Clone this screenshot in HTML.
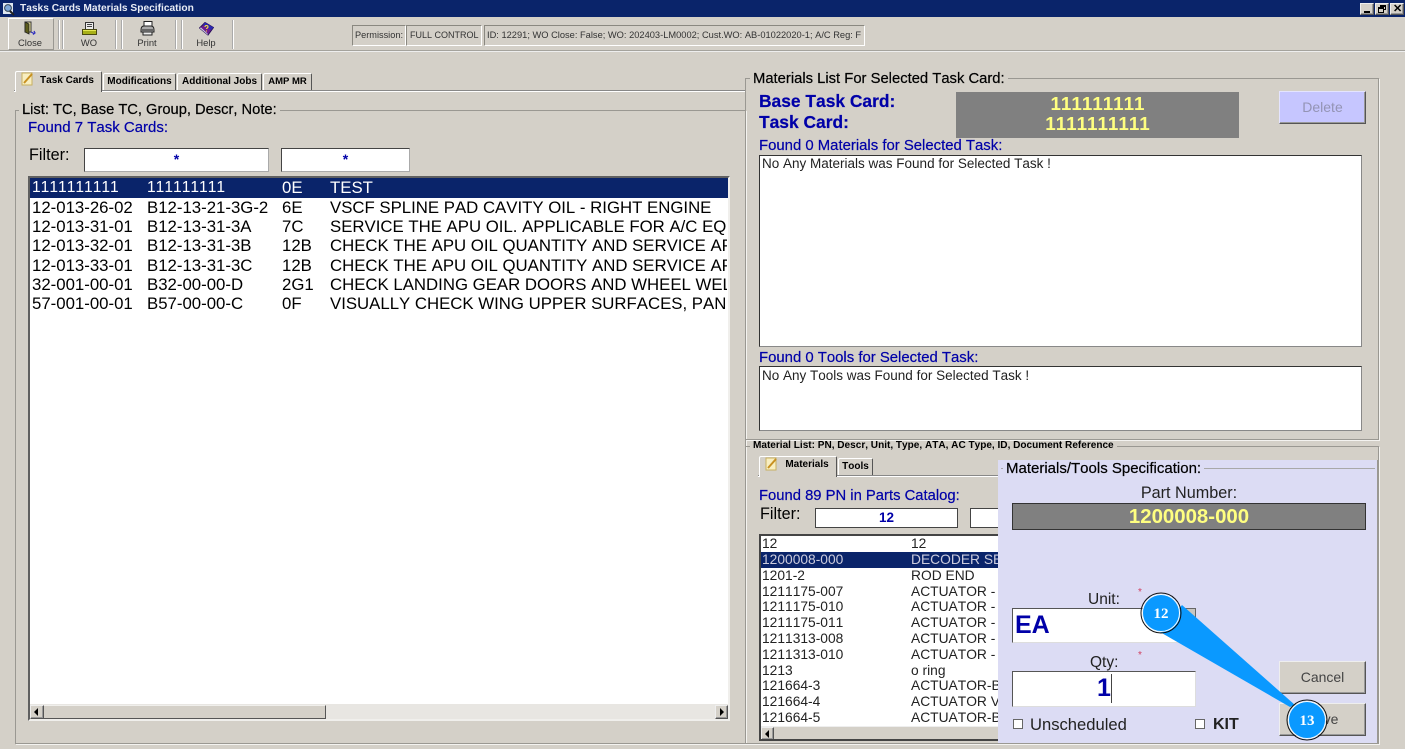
<!DOCTYPE html>
<html><head><meta charset="utf-8">
<style>
html,body{margin:0;padding:0;width:1405px;height:749px;overflow:hidden;background:#d4d0c8;font-family:"Liberation Sans",sans-serif;color:#000;font-kerning:none}
div,span{position:absolute;white-space:nowrap;box-sizing:border-box}
.t{line-height:1}
.blue{color:#0000a8;-webkit-text-stroke:.2px #0000a8}
.frame{border:1px solid #9a9892;box-shadow:1px 1px 0 #f4f3f0}
.leg{background:#d4d0c8;padding:0 3px;line-height:1;-webkit-text-stroke:.2px #000}
.inp{background:#fff;border:1px solid #444;border-right-color:#aaa;border-bottom-color:#aaa;text-align:center;color:#0000a8;font-weight:bold}
.sunk{border:2px solid;border-color:#606060 #f0efec #f0efec #606060}
.row{font-size:16.8px;line-height:19.4px;height:20px;left:0;width:697px;overflow:hidden}
.row span{top:0}
.r2{font-size:13.8px;line-height:16px;height:16px;color:#222;left:0;width:240px}
.r2 span{top:0}
.btn{background:#d4d0c8;border:1px solid;border-color:#eee #555 #555 #eee;box-shadow:inset -1px -1px 0 #999;text-align:center;font-size:14px;color:#444}
.tab{border:1px solid #fff;border-right-color:#555;border-bottom:none;font-size:10px;font-weight:bold;text-align:center;border-radius:2px 2px 0 0;background:#d4d0c8}
.vs{width:2px;background:#aaa;border-right:1px solid #fff;top:20px;height:29px}
.tb{font-size:9.4px;color:#333;text-align:center;top:38px;line-height:1}
</style></head><body>

<div style="left:0;top:0;width:1405px;height:17px;background:#0a246a"></div>
<svg style="position:absolute;left:2px;top:2px" width="14" height="14" viewBox="0 0 14 14"><rect x="1" y="1" width="10" height="11" fill="#dde6f0"/><circle cx="6" cy="6" r="3.4" fill="#7fa8d8" stroke="#345"/><path d="M8 9l4 4" stroke="#222" stroke-width="2"/></svg>
<div class="t" style="left:20px;top:4px;font-size:10.2px;font-weight:bold;color:#e8ecf5">Tasks Cards Materials Specification</div>
<div class="btn" style="left:1360px;top:3px;width:14px;height:12px"></div><div style="left:1364px;top:11px;width:6px;height:2px;background:#000"></div>
<div class="btn" style="left:1375px;top:3px;width:14px;height:12px"></div><div style="left:1380px;top:5px;width:6px;height:5px;border:1px solid #000;border-top-width:2px"></div><div style="left:1378px;top:7px;width:6px;height:6px;border:1px solid #000;border-top-width:2px;background:#d4d0c8"></div>
<div class="btn" style="left:1390px;top:3px;width:14px;height:12px"></div><div class="t" style="left:1393px;top:4px;font-size:11px;font-weight:bold">✕</div>

<div style="left:0;top:50px;width:1405px;height:2px;background:#a5a39d;border-bottom:1px solid #eee"></div>
<div style="left:8px;top:18px;width:46px;height:32px;border:1px solid;border-color:#fff #9a9892 #9a9892 #fff"></div>
<div class="vs" style="left:58px"></div><div class="vs" style="left:62px"></div>
<div class="vs" style="left:115px"></div><div class="vs" style="left:121px"></div>
<div class="vs" style="left:175px"></div><div class="vs" style="left:181px"></div><div class="vs" style="left:232px"></div>
<svg style="position:absolute;left:23px;top:21px" width="14" height="15" viewBox="0 0 14 15"><path d="M2 1h6v10H2z" fill="#f0e8a0" stroke="#333"/><path d="M2 1l4 2v10l-4-2z" fill="#5c5c1c" stroke="#222" stroke-width=".8"/><path d="M8 11l3 1.5M10 13.5l2-1.5-1-2" stroke="#3030c0" fill="none" stroke-width="1.2"/></svg>
<div class="tb" style="left:10px;width:40px">Close</div>
<svg style="position:absolute;left:82px;top:22px" width="15" height="14" viewBox="0 0 15 14"><rect x="3.500" y=".5" width="8" height="7" fill="#ececec" stroke="#333"/><path d="M5 2.500h5M5 4.500h5" stroke="#444"/><path d="M.5 7.500h14v5H.5z" fill="#a8b018" stroke="#4a4a10"/><path d="M1 8.500h13" stroke="#e4e850"/></svg>
<div class="tb" style="left:69px;width:40px">WO</div>
<svg style="position:absolute;left:140px;top:21px" width="15" height="15" viewBox="0 0 15 15"><rect x="4" y=".5" width="8" height="5" fill="#fff" stroke="#222"/><path d="M1 9c0-3 1-4 3-4h7c2 0 3 1 3 4v2H1z" fill="#aaa" stroke="#222"/><path d="M2 9h11" stroke="#222"/><rect x="3" y="11" width="9" height="3" fill="#eee" stroke="#222"/></svg>
<div class="tb" style="left:127px;width:40px">Print</div>
<svg style="position:absolute;left:199px;top:22px" width="15" height="14" viewBox="0 0 15 14"><path d="M.5 6L6 .5l8.500 5L9 13z" fill="#6a1a90" stroke="#28105a"/><path d="M6 .5l8.500 5L12 8 4 3z" fill="#2a2ab0"/><path d="M.5 6L9 13l-.5-1.500L2 5.500z" fill="#c8c8e0"/><path d="M6 5c0-2 3-2 3 0 0 1-1.500 1-1.500 2M7.500 8.500v1" stroke="#ffe040" fill="none" stroke-width="1.100"/></svg>
<div class="tb" style="left:186px;width:40px">Help</div>

<div style="left:352px;top:25px;width:54px;height:21px;border:1px solid;border-color:#8a8880 #fff #fff #8a8880;font-size:9.2px;line-height:19px;padding-left:2px;color:#333">Permission:</div>
<div style="left:406px;top:25px;width:76px;height:21px;border:1px solid;border-color:#8a8880 #fff #fff #8a8880;font-size:9px;line-height:19px;padding-left:3px;color:#333">FULL CONTROL</div>
<div style="left:484px;top:25px;width:381px;height:21px;border:1px solid;border-color:#8a8880 #fff #fff #8a8880;font-size:9.3px;line-height:19px;padding-left:2px;color:#333;overflow:hidden">ID: 12291; WO Close: False; WO: 202403-LM0002; Cust.WO: AB-01022020-1; A/C Reg: F</div>

<!-- left tabs -->
<div style="left:14px;top:90px;width:732px;height:1px;background:#888"></div>
<div style="left:14px;top:91px;width:732px;height:1px;background:#fff"></div>
<div class="tab" style="left:15px;top:71px;width:87px;height:21px;z-index:2;line-height:17px;padding-left:17px;font-size:10px">Task Cards</div>
<svg style="position:absolute;left:21px;top:72px;z-index:3" width="14" height="14" viewBox="0 0 14 14"><rect x="1" y="1" width="10" height="12" fill="#f8eec0" stroke="#c8b060"/><path d="M3 11L11 2" stroke="#c89020" stroke-width="2"/></svg>
<div class="tab" style="left:103px;top:73px;width:73px;height:17px;line-height:15px">Modifications</div>
<div class="tab" style="left:177px;top:73px;width:85px;height:17px;line-height:15px">Additional Jobs</div>
<div class="tab" style="left:263px;top:73px;width:49px;height:17px;line-height:15px;font-size:9.5px">AMP MR</div>

<!-- left panel -->
<div class="frame" style="left:15px;top:110px;width:731px;height:634px"></div>
<div class="leg" style="left:19px;top:103px;font-size:14.7px">List: TC, Base TC, Group, Descr, Note:</div>
<div class="t blue" style="left:28px;top:120px;font-size:15px">Found 7 Task Cards:</div>
<div class="t" style="left:29px;top:147px;font-size:16.2px">Filter:</div>
<div class="inp" style="left:84px;top:148px;width:185px;height:24px;font-size:14px;line-height:20px">*</div>
<div class="inp" style="left:281px;top:148px;width:129px;height:24px;font-size:14px;line-height:20px">*</div>
<div class="sunk" style="left:28px;top:176px;width:702px;height:545px;background:#fff;overflow:hidden">
  <div style="left:0;top:0;width:698px;height:20px;background:#0a246a"></div>
  <div class="row" style="top:0;color:#fff"><span style="left:2px;font-size:15.6px">1111111111</span><span style="left:117px;font-size:15.6px">111111111</span><span style="left:252px">0E</span><span style="left:300px">TEST</span></div>
  <div class="row" style="top:20px"><span style="left:2px">12-013-26-02</span><span style="left:117px">B12-13-21-3G-2</span><span style="left:252px">6E</span><span style="left:300px">VSCF SPLINE PAD CAVITY OIL - RIGHT ENGINE</span></div>
  <div class="row" style="top:39px"><span style="left:2px">12-013-31-01</span><span style="left:117px">B12-13-31-3A</span><span style="left:252px">7C</span><span style="left:300px">SERVICE THE APU OIL. APPLICABLE FOR A/C EQUIPPED</span></div>
  <div class="row" style="top:58px"><span style="left:2px">12-013-32-01</span><span style="left:117px">B12-13-31-3B</span><span style="left:252px">12B</span><span style="left:300px">CHECK THE APU OIL QUANTITY AND SERVICE APU</span></div>
  <div class="row" style="top:78px"><span style="left:2px">12-013-33-01</span><span style="left:117px">B12-13-31-3C</span><span style="left:252px">12B</span><span style="left:300px">CHECK THE APU OIL QUANTITY AND SERVICE APU</span></div>
  <div class="row" style="top:97px"><span style="left:2px">32-001-00-01</span><span style="left:117px">B32-00-00-D</span><span style="left:252px">2G1</span><span style="left:300px">CHECK LANDING GEAR DOORS AND WHEEL WELL</span></div>
  <div class="row" style="top:116px"><span style="left:2px">57-001-00-01</span><span style="left:117px">B57-00-00-C</span><span style="left:252px">0F</span><span style="left:300px">VISUALLY CHECK WING UPPER SURFACES, PANELS</span></div>
  <div style="left:0;top:526px;width:698px;height:15px;background:#e8e6e2"></div>
  <div class="btn" style="left:0;top:527px;width:14px;height:14px"></div>
  <div style="left:4px;top:530px;border:4px solid transparent;border-right-color:#000;border-left:0"></div>
  <div style="left:14px;top:527px;width:282px;height:14px;background:#d4d0c8;border-top:1px solid #f0efec;border-right:1px solid #555;border-bottom:1px solid #555"></div>
  <div class="btn" style="left:685px;top:527px;width:13px;height:14px"></div>
  <div style="left:690px;top:530px;border:4px solid transparent;border-left-color:#000;border-right:0"></div>
</div>

<!-- right upper panel -->
<div class="frame" style="left:745px;top:78px;width:634px;height:362px"></div>
<div class="leg" style="left:750px;top:72px;font-size:14.8px">Materials List For Selected Task Card:</div>
<div class="t blue" style="left:759px;top:93px;font-size:17.4px;font-weight:bold">Base Task Card:</div>
<div class="t blue" style="left:759px;top:114px;font-size:17.4px;font-weight:bold">Task Card:</div>
<div style="left:956px;top:92px;width:283px;height:46px;background:#808080"></div>
<div class="t" style="left:956px;width:283px;top:95px;font-size:18.8px;font-weight:bold;color:#ffff80;text-align:center">111111111</div>
<div class="t" style="left:956px;width:283px;top:115px;font-size:18.8px;font-weight:bold;color:#ffff80;text-align:center">1111111111</div>
<div class="btn" style="left:1279px;top:91px;width:87px;height:33px;background:#c6c6ff;border-color:#e4e4ff #555 #555 #e4e4ff;color:#9494b4;line-height:31px">Delete</div>
<div class="t blue" style="left:759px;top:139px;font-size:14.9px">Found 0 Materials for Selected Task:</div>
<div style="left:759px;top:155px;width:603px;height:192px;background:#fff;border:1px solid #333;border-right-color:#888;border-bottom-color:#888;font-size:13.5px;line-height:16px;padding-left:2px;color:#222">No Any Materials was Found for Selected Task !</div>
<div class="t blue" style="left:759px;top:351px;font-size:14.9px">Found 0 Tools for Selected Task:</div>
<div style="left:759px;top:366px;width:603px;height:65px;background:#fff;border:1px solid #333;border-right-color:#888;border-bottom-color:#888;font-size:13.5px;line-height:17px;padding-left:2px;color:#222">No Any Tools was Found for Selected Task !</div>

<!-- right lower panel -->
<div class="frame" style="left:745px;top:446px;width:634px;height:298px"></div>
<div class="leg" style="left:750px;top:441px;font-size:10.05px;font-weight:bold;padding:0 3px;-webkit-text-stroke:0">Material List: PN, Descr, Unit, Type, ATA, AC Type, ID, Document Reference</div>
<div style="left:758px;top:475px;width:300px;height:1px;background:#888"></div>
<div style="left:758px;top:476px;width:300px;height:1px;background:#fff"></div>
<div class="tab" style="left:759px;top:456px;width:78px;height:21px;z-index:2;line-height:15px;padding-left:18px;font-size:10px">Materials</div>
<svg style="position:absolute;left:765px;top:457px;z-index:3" width="14" height="14" viewBox="0 0 14 14"><rect x="1" y="1" width="10" height="12" fill="#f8eec0" stroke="#c8b060"/><path d="M3 11L11 2" stroke="#c89020" stroke-width="2"/></svg>
<div class="tab" style="left:838px;top:458px;width:35px;height:17px;line-height:15px">Tools</div>
<div class="t blue" style="left:759px;top:489px;font-size:14.8px">Found 89 PN in Parts Catalog:</div>
<div class="t" style="left:760px;top:506px;font-size:16.2px">Filter:</div>
<div class="inp" style="left:815px;top:508px;width:143px;height:20px;font-size:13.5px;line-height:18px;border-color:#444">12</div>
<div class="inp" style="left:970px;top:508px;width:40px;height:20px;border-color:#444"></div>
<div class="sunk" style="left:759px;top:534px;width:242px;height:207px;background:#fff;border-color:#444 #fff #444 #444;overflow:hidden">
  <div style="left:0;top:16px;width:240px;height:16px;background:#0a246a"></div>
  <div class="r2" style="top:0"><span style="left:1px">12</span><span style="left:150px">12</span></div>
  <div class="r2" style="top:16px;color:#ccd"><span style="left:1px">1200008-000</span><span style="left:150px">DECODER SELCAL</span></div>
  <div class="r2" style="top:32px"><span style="left:1px">1201-2</span><span style="left:150px">ROD END</span></div>
  <div class="r2" style="top:48px"><span style="left:1px">1211175-007</span><span style="left:150px">ACTUATOR - TRIM</span></div>
  <div class="r2" style="top:63px"><span style="left:1px">1211175-010</span><span style="left:150px">ACTUATOR - TRIM</span></div>
  <div class="r2" style="top:79px"><span style="left:1px">1211175-011</span><span style="left:150px">ACTUATOR - TRIM</span></div>
  <div class="r2" style="top:95px"><span style="left:1px">1211313-008</span><span style="left:150px">ACTUATOR - TRIM</span></div>
  <div class="r2" style="top:111px"><span style="left:1px">1211313-010</span><span style="left:150px">ACTUATOR - TRIM</span></div>
  <div class="r2" style="top:127px"><span style="left:1px">1213</span><span style="left:150px">o ring</span></div>
  <div class="r2" style="top:142px"><span style="left:1px">121664-3</span><span style="left:150px">ACTUATOR-BRAKE</span></div>
  <div class="r2" style="top:158px"><span style="left:1px">121664-4</span><span style="left:150px">ACTUATOR VALVE</span></div>
  <div class="r2" style="top:174px"><span style="left:1px">121664-5</span><span style="left:150px">ACTUATOR-BRAKE</span></div>
  <div style="left:0;top:190px;width:240px;height:15px;background:#d4d0c8;border-top:1px solid #eee"></div>
  <div class="btn" style="left:0;top:191px;width:13px;height:13px"></div>
  <div style="left:4px;top:194px;border:4px solid transparent;border-right-color:#000;border-left:0"></div>
</div>

<!-- dialog -->
<div style="left:998px;top:460px;width:380px;height:284px;background:#dcdcf4;border-right:1px solid #9a9892;border-bottom:1px solid #9a9892"></div>
<div style="left:1001px;top:468px;width:374px;height:1px;background:#a8a8a8"></div>
<div class="leg" style="left:1003px;top:461px;font-size:15px;background:#dcdcf4">Materials/Tools Specification:</div>
<div class="t" style="left:998px;width:382px;top:485px;font-size:16.2px;text-align:center;color:#222">Part Number:</div>
<div style="left:1012px;top:503px;width:354px;height:27px;background:#808080;border:1px solid #333;color:#ffff80;font-weight:bold;font-size:20.4px;text-align:center;line-height:26px">1200008-000</div>
<div class="t" style="left:1088px;top:592px;font-size:15.5px;color:#222">Unit:</div>
<div class="t" style="left:1138px;top:588px;font-size:10px;color:#d04060">*</div>
<div style="left:1012px;top:608px;width:184px;height:35px;background:#fff;border:1px solid #555;border-right-color:#ddd;border-bottom-color:#ddd;color:#0000a8;font-weight:bold;font-size:25px;line-height:33px;padding-left:2px">EA</div>
<div style="left:1182px;top:608px;width:14px;height:14px;background:#c8c6c0;border:1px solid #666"></div>
<div class="t" style="left:1090px;top:655px;font-size:15.5px;color:#222">Qty:</div>
<div class="t" style="left:1138px;top:651px;font-size:10px;color:#d04060">*</div>
<div style="left:1012px;top:671px;width:184px;height:36px;background:#fff;border:1px solid #555;border-right-color:#ddd;border-bottom-color:#ddd"></div>
<div class="t" style="left:1097px;top:676px;font-size:25px;font-weight:bold;color:#0000a8">1</div>
<div style="left:1111px;top:674px;width:1px;height:29px;background:#444"></div>
<div style="left:1013px;top:719px;width:10px;height:10px;background:#fff;border:1px solid #666"></div>
<div class="t" style="left:1030px;top:717px;font-size:16.6px;color:#222">Unscheduled</div>
<div style="left:1195px;top:719px;width:10px;height:10px;background:#fff;border:1px solid #666"></div>
<div class="t" style="left:1213px;top:717px;font-size:16px;font-weight:bold;color:#222">KIT</div>
<div class="btn" style="left:1279px;top:661px;width:87px;height:33px;line-height:31px">Cancel</div>
<div class="btn" style="left:1279px;top:703px;width:87px;height:33px;line-height:31px">Save</div>

<!-- callouts -->
<svg style="position:absolute;left:1130px;top:585px" width="200" height="164" viewBox="0 0 200 164">
<path d="M52 20L165 120 160 122 30 47Z" fill="#0a99ff"/>
<circle cx="31" cy="28" r="19" fill="#0a99ff"/>
<circle cx="31" cy="28" r="20" fill="none" stroke="#111" stroke-width="1"/>
<circle cx="31" cy="28" r="18.500" fill="none" stroke="#fff" stroke-width="1"/>
<circle cx="177" cy="135" r="19" fill="#0a99ff"/>
<circle cx="177" cy="135" r="20" fill="none" stroke="#111" stroke-width="1"/>
<circle cx="177" cy="135" r="18.500" fill="none" stroke="#fff" stroke-width="1"/>
<text x="31" y="33" font-family="Liberation Serif" font-size="15" font-weight="bold" fill="#fff" text-anchor="middle">12</text>
<text x="177" y="140" font-family="Liberation Serif" font-size="15" font-weight="bold" fill="#fff" text-anchor="middle">13</text>
</svg>
</body></html>
